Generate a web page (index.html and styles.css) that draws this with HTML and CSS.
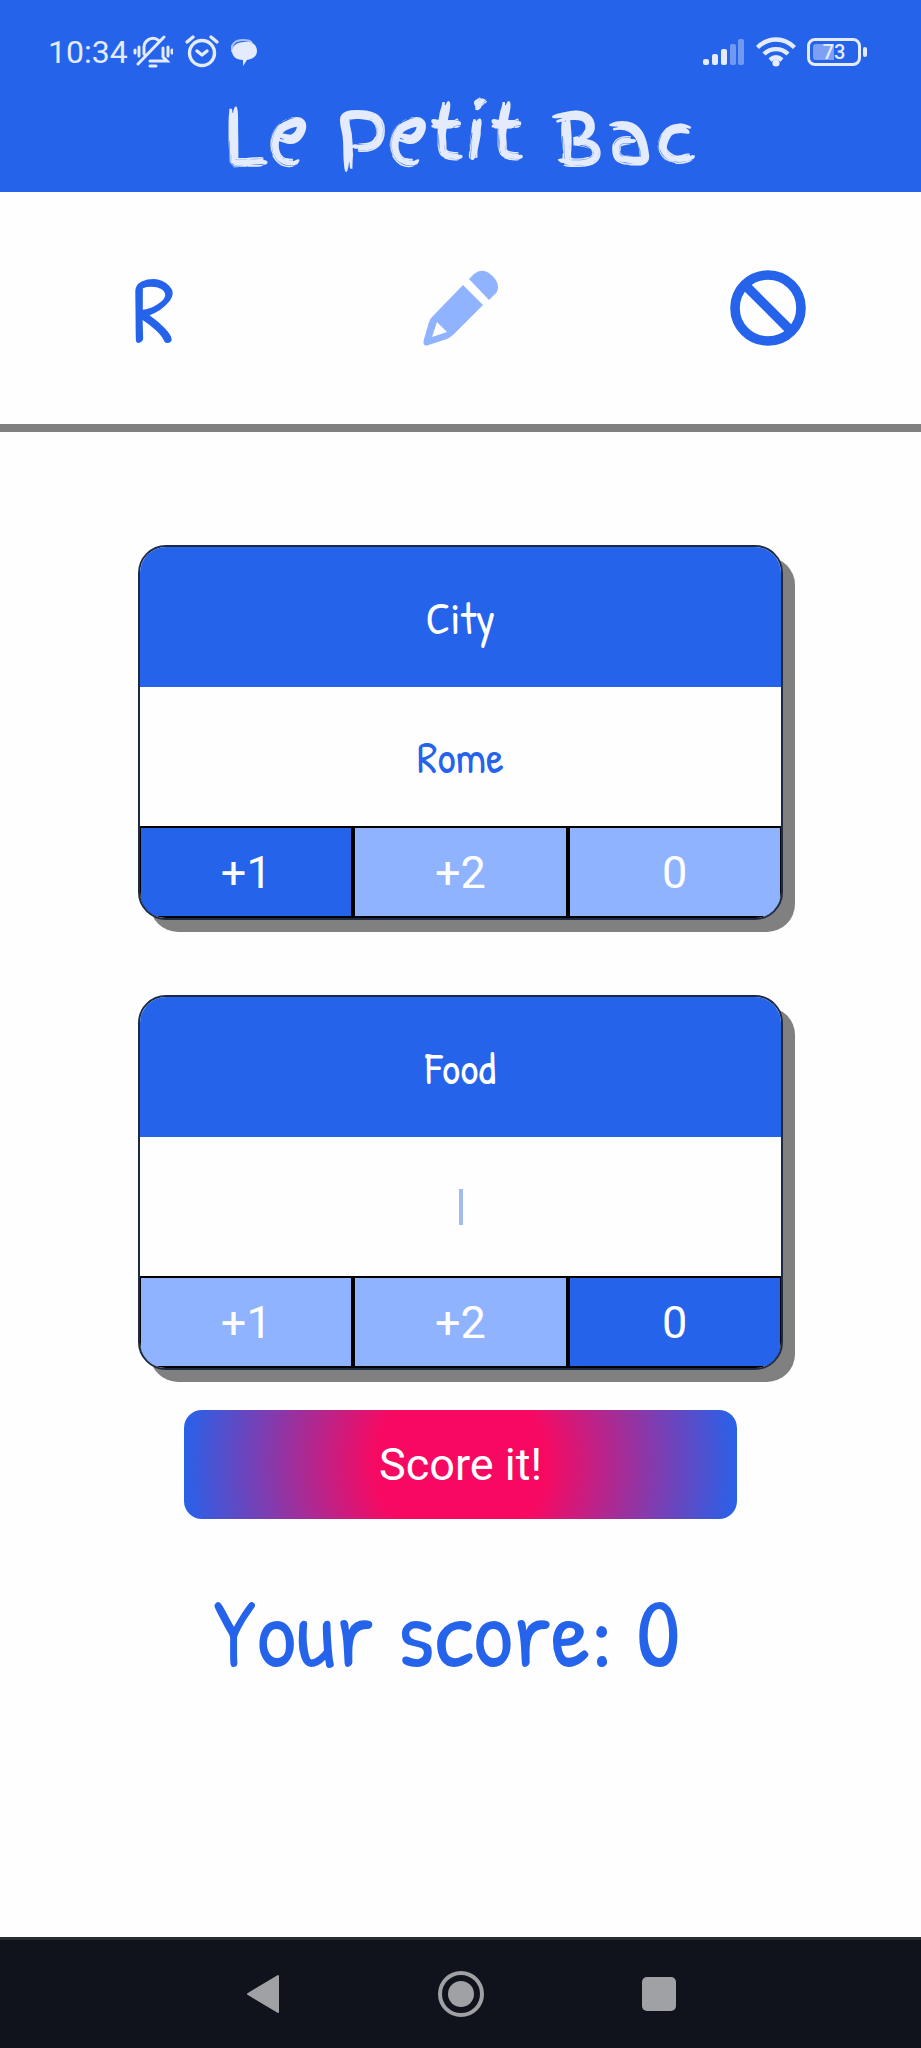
FILE: index.html
```html
<!DOCTYPE html>
<html lang="en">
<head>
<meta charset="utf-8">
<meta name="viewport" content="width=device-width, initial-scale=1">
<title>Le Petit Bac</title>
<link rel="stylesheet" href="styles.css">
</head>
<body>
<header class="app-header">
  <div class="status-bar">
    <div class="status-group">
      <span class="clock">10:34</span>
      <svg class="status-icon wide" viewBox="0 0 40 36" role="img" aria-label="Ringer off" fill="none" stroke="currentColor" stroke-width="3" stroke-linecap="round">
        <path d="M11 20V14a9 9 0 0 1 14-8M30 14v9l4 4H17M5 30 31 3M17 32h6M6 13v9M2 16v3M35 13v9M39 16v3"/>
      </svg>
      <svg class="status-icon" viewBox="0 0 36 36" role="img" aria-label="Alarm set" fill="none" stroke="currentColor" stroke-width="3.4" stroke-linecap="round" stroke-linejoin="round">
        <circle cx="18" cy="19" r="12.5"/><path d="m13 17 5 4 5-4M3 8l6-5M33 8l-6-5"/>
      </svg>
      <svg class="status-icon chat" viewBox="4 3 27 28" role="img" aria-label="Message">
        <path d="M5 17C3 9 9 5 16 5c4 0 7 0 9 3" fill="none" stroke="currentColor" stroke-width="2" opacity=".7"/>
        <path d="M17 7c8-1 13 3 13 9 0 5-4 8-10 9l-4 6v-6C9 25 5 21 5 16c0-5 5-9 12-9Z" fill="currentColor"/>
      </svg>
    </div>
    <div class="status-group">
      <svg class="status-icon signal" viewBox="0 0 42 28" role="img" aria-label="Signal" fill="currentColor">
        <rect x="0" y="21" width="6" height="6" rx="2"/><rect x="9" y="16" width="6" height="11" rx="2"/><rect x="18" y="11" width="6" height="16" rx="2"/>
        <g opacity=".4"><rect x="27" y="6" width="6" height="21" rx="2"/><rect x="35" y="1" width="6" height="26" rx="2"/></g>
      </svg>
      <svg class="status-icon wifi" viewBox="0 0 40 30" role="img" aria-label="Wi-Fi" fill="none" stroke="currentColor" stroke-width="4.400">
        <path d="M1.500 10.500C12-.2 28-.2 38.500 10.500M8 17c7-6.500 17-6.500 24 0M14 23c4-3.500 8-3.500 12 0"/><circle cx="20" cy="26" r="3.600" fill="currentColor" stroke="none"/>
      </svg>
      <span class="battery"><span class="battery-level">73</span></span>
    </div>
  </div>
  <h1 class="app-title">Le Petit Bac</h1>
</header>

<nav class="toolbar" aria-label="Game">
  <span class="letter">R</span>
  <button class="tool" type="button" aria-label="Edit">
    <svg class="tool-icon pencil" viewBox="0 0 76 76" fill="currentColor">
      <path fill-rule="evenodd" d="M40 15 60 35 31 64Q28 67 24 69L4 75.500Q0 76 .5 71L6 52Q7 49 9 47ZM14 52 9 67 24 62Z"/>
      <path d="M46 9 51 4Q58-2 66 3 75 10 75 17 75 22 71 25L66 30Z"/>
    </svg>
  </button>
  <button class="tool" type="button" aria-label="Stop">
    <svg class="tool-icon" viewBox="0 0 76 76" fill="none" stroke="currentColor" stroke-width="9.600">
      <circle cx="38" cy="38" r="33"/><path d="m14 14 48 48"/>
    </svg>
  </button>
</nav>

<main class="game">
  <section class="card">
    <label class="card-title" for="city">City</label>
    <div class="answer"><input class="answer-input" id="city" type="text" value="Rome"></div>
    <div class="points">
      <button class="point selected" type="button">+1</button>
      <button class="point" type="button">+2</button>
      <button class="point" type="button">0</button>
    </div>
  </section>
  <section class="card">
    <label class="card-title" for="food">Food</label>
    <div class="answer"><input class="answer-input" id="food" type="text"><span class="caret"></span></div>
    <div class="points">
      <button class="point" type="button">+1</button>
      <button class="point" type="button">+2</button>
      <button class="point selected" type="button">0</button>
    </div>
  </section>
  <button class="score-button" type="button">Score it!</button>
  <p class="score">Your score: 0</p>
</main>

<footer class="system-nav">
  <button class="nav-button" type="button" aria-label="Back"><svg class="nav-icon" viewBox="0 0 48 48"><path d="M9 24 39 6v36Z" fill="currentColor" stroke="currentColor" stroke-width="2" stroke-linejoin="round"/></svg></button>
  <button class="nav-button" type="button" aria-label="Home"><svg class="nav-icon" viewBox="0 0 48 48"><circle cx="24" cy="24" r="21" fill="none" stroke="currentColor" stroke-width="4"/><circle cx="24" cy="24" r="13" fill="currentColor"/></svg></button>
  <button class="nav-button" type="button" aria-label="Recent apps"><svg class="nav-icon" viewBox="0 0 48 48"><rect x="7" y="7" width="34" height="34" rx="5" fill="currentColor"/></svg></button>
</footer>
</body>
</html>
```

FILE: styles.css
```css
:root {
  --blue: #2563eb;
  --light-blue: #90b3ff;
  --ice: #e3ebfd;
  --hand: "Patrick Hand", "Liberation Sans Narrow", "DejaVu Sans Condensed", sans-serif;
}

* { box-sizing: border-box; }

body {
  margin: 0;
  min-height: 100vh;
  display: flex;
  flex-direction: column;
  background: #fefefe;
  font-family: Roboto, sans-serif;
}

button {
  border: 0;
  padding: 0;
  background: none;
  color: inherit;
  font: inherit;
}

svg { display: block; }

.app-header {
  height: 192px;
  background: var(--blue);
  color: var(--ice);
}

.status-bar {
  height: 92px;
  padding: 12px 54px 0 48px;
  display: flex;
  align-items: center;
  justify-content: space-between;
}

.status-group {
  display: flex;
  align-items: center;
  gap: 11px;
}

.clock {
  font-size: 32px;
  line-height: 36px;
}

.status-icon { width: 36px; height: 36px; }
.status-icon.wide { width: 40px; margin-left: -6px; }
.status-icon.chat { width: 27px; height: 28px; }
.status-icon.signal { width: 42px; height: 28px; }
.status-icon.wifi { width: 40px; height: 30px; }

.battery {
  position: relative;
  width: 54px;
  height: 28px;
  margin-right: 6px;
  padding: 3px;
  border: 3px solid var(--ice);
  border-radius: 8px;
}

.battery::after {
  content: "";
  position: absolute;
  top: 6px;
  right: -9px;
  width: 4px;
  height: 10px;
  border-radius: 2px;
  background: var(--ice);
}

.battery-level {
  display: block;
  height: 16px;
  border-radius: 3px;
  background: linear-gradient(90deg, #7d9ff4 50%, transparent 50%);
  font-size: 20px;
  font-weight: 500;
  line-height: 17px;
  text-align: center;
}

.app-title {
  margin: 0;
  font-family: "Finger Paint", "Caveat Brush", "Gochi Hand", "Patrick Hand", Lato, sans-serif;
  font-size: 75px;
  font-weight: 400;
  line-height: 88px;
  text-align: center;
}

.toolbar {
  height: 240px;
  border-bottom: 8px solid #808080;
  display: grid;
  grid-template-columns: repeat(3, 1fr);
  align-items: center;
  justify-items: center;
  color: var(--blue);
}

.letter {
  font-family: var(--hand);
  font-size: 96px;
  line-height: 100px;
}

.tool-icon { width: 76px; height: 76px; }
.tool-icon.pencil { color: var(--light-blue); }

.game {
  flex: 1;
  padding-top: 113px;
  display: flex;
  flex-direction: column;
  align-items: center;
}

.card {
  width: 70%;
  margin-bottom: 75px;
  border: 2px solid #1c2a44;
  border-radius: 28px;
  overflow: hidden;
  background: #fefefe;
  box-shadow: 12px 12px 0 #808080;
}

.card + .card { margin-bottom: 40px; }

.card-title {
  height: 140px;
  display: grid;
  place-items: center;
  background: var(--blue);
  color: #fff;
  font-family: var(--hand);
  font-size: 45px;
}

.answer {
  position: relative;
  height: 139px;
}

.answer-input {
  width: 100%;
  height: 100%;
  border: 0;
  padding: 0;
  background: none;
  color: var(--blue);
  font-family: var(--hand);
  font-size: 45px;
  text-align: center;
}

.caret {
  position: absolute;
  inset: 0;
  width: 4px;
  height: 36px;
  margin: auto;
  background: #a3bbf3;
}

.points {
  height: 92px;
  padding: 2px 1px;
  display: grid;
  grid-template-columns: repeat(3, 1fr);
  gap: 4px;
  background: #000;
}

.point {
  background: var(--light-blue);
  color: #fff;
  font-size: 45px;
}

.point.selected { background: var(--blue); }

.score-button {
  width: 60%;
  height: 109px;
  border-radius: 18px;
  background: radial-gradient(circle, #f80961 30%, var(--blue) 100%);
  color: #fff;
  font-size: 45px;
}

.score {
  margin: 60px 28px 60px 0;
  color: var(--blue);
  font-family: var(--hand);
  font-size: 99px;
  line-height: 104px;
}

.system-nav {
  height: 111px;
  border-top: 3px solid #272c30;
  display: flex;
  align-items: center;
  justify-content: center;
  gap: 150px;
  background: #10131b;
  color: #a0a1a4;
}

.nav-icon { width: 48px; height: 48px; }
```
